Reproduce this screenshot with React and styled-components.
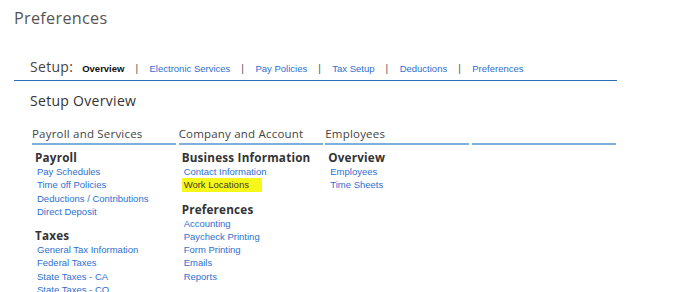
import styled, { createGlobalStyle } from 'styled-components';

const GlobalStyle = createGlobalStyle`
  body {
    margin: 0;
    background: #fff;
    font-family: "Liberation Sans", Arial, sans-serif;
  }
`;

const navItems = ['Electronic Services', 'Pay Policies', 'Tax Setup', 'Deductions', 'Preferences'];

const columns = [
  {
    title: 'Payroll and Services',
    groups: [
      { heading: 'Payroll', links: ['Pay Schedules', 'Time off Policies', 'Deductions / Contributions', 'Direct Deposit'] },
      { heading: 'Taxes', links: ['General Tax Information', 'Federal Taxes', 'State Taxes - CA', 'State Taxes - CO'] },
    ],
  },
  {
    title: 'Company and Account',
    groups: [
      { heading: 'Business Information', links: ['Contact Information', 'Work Locations'] },
      { heading: 'Preferences', links: ['Accounting', 'Paycheck Printing', 'Form Printing', 'Emails', 'Reports'] },
    ],
  },
  {
    title: 'Employees',
    groups: [{ heading: 'Overview', links: ['Employees', 'Time Sheets'] }],
  },
  { title: '', groups: [] },
];

export default function App() {
  return (
    <Page>
      <GlobalStyle />
      <Title>Preferences</Title>
      <SetupBar>
        <SetupLabel>Setup:</SetupLabel>
        <NavCurrent>Overview</NavCurrent>
        {navItems.map((item) => (
          <NavPair key={item}>
            <Separator>|</Separator>
            <NavLink>{item}</NavLink>
          </NavPair>
        ))}
      </SetupBar>
      <Overview>
        <OverviewTitle>Setup Overview</OverviewTitle>
        <Columns>
          {columns.map((col, i) => (
            <Column key={i}>
              <ColumnHeader>{col.title || '\u00a0'}</ColumnHeader>
              {col.groups.map((g) => (
                <Group key={g.heading}>
                  <GroupHeading>{g.heading}</GroupHeading>
                  {g.links.map((l) => (
                    <LinkItem key={l} $highlight={l === 'Work Locations'}>
                      {l}
                    </LinkItem>
                  ))}
                </Group>
              ))}
            </Column>
          ))}
        </Columns>
      </Overview>
    </Page>
  );
}

const Page = styled.div`
  width: 683px;
  height: 292px;
  overflow: hidden;
  padding: 7px 0 0 14px;
  box-sizing: border-box;
`;

const Title = styled.h1`
  margin: 0;
  font-family: "Open Sans", sans-serif;
  font-weight: 400;
  font-size: 16.2px;
  line-height: 22px;
  color: #555;
  letter-spacing: 0.3px;
`;

const SetupBar = styled.div`
  width: 603px;
  margin-top: 28px;
  padding: 0 0 4px 16px;
  box-sizing: border-box;
  border-bottom: 1.5px solid #2d6db3;
  display: flex;
  align-items: baseline;
`;

const SetupLabel = styled.span`
  font-family: "Open Sans", sans-serif;
  font-size: 14px;
  color: #444;
  margin-right: 9px;
  letter-spacing: 0.3px;
`;

const NavCurrent = styled.span`
  font-size: 9.5px;
  font-weight: bold;
  color: #111;
`;

const NavPair = styled.span`
  display: inline-flex;
  align-items: baseline;
`;

const Separator = styled.span`
  font-size: 10px;
  color: #555;
  margin: 0 11.5px 0 11px;
`;

const NavLink = styled.span`
  font-size: 9.5px;
  color: #2e6fd1;
`;

const Overview = styled.div`
  padding: 10px 0 0 16px;
`;

const OverviewTitle = styled.h2`
  margin: 0;
  font-family: "Open Sans", sans-serif;
  font-weight: 400;
  font-size: 14px;
  line-height: 20px;
  color: #333;
  letter-spacing: 0.3px;
`;

const Columns = styled.div`
  width: 584px;
  display: grid;
  grid-template-columns: repeat(4, 1fr);
  column-gap: 2.5px;
  margin: 15px 0 0 2px;
`;

const Column = styled.div`
  display: flex;
  flex-direction: column;
`;

const ColumnHeader = styled.div`
  font-family: "Open Sans", sans-serif;
  font-size: 11.5px;
  line-height: 16px;
  color: #444;
  letter-spacing: 0.2px;
  padding-bottom: 1px;
  border-bottom: 2px solid #7db0df;
  margin-bottom: 4px;
`;

const Group = styled.div`
  display: flex;
  flex-direction: column;
  align-items: flex-start;
  padding-left: 3px;
  margin-bottom: 9px;
`;

const GroupHeading = styled.div`
  font-family: "Open Sans", sans-serif;
  font-weight: 700;
  font-size: 11.7px;
  line-height: 16px;
  color: #333;
  letter-spacing: 0.2px;
`;

const LinkItem = styled.div`
  font-size: 9.5px;
  line-height: 13.3px;
  color: ${(p) => (p.$highlight ? '#3d3d2a' : '#2e6fd1')};
  margin-left: ${(p) => (p.$highlight ? '0' : '2px')};
  padding: ${(p) => (p.$highlight ? '0 13px 0 2px' : '0')};
  background: ${(p) => (p.$highlight ? '#f7f71a' : 'transparent')};
`;
